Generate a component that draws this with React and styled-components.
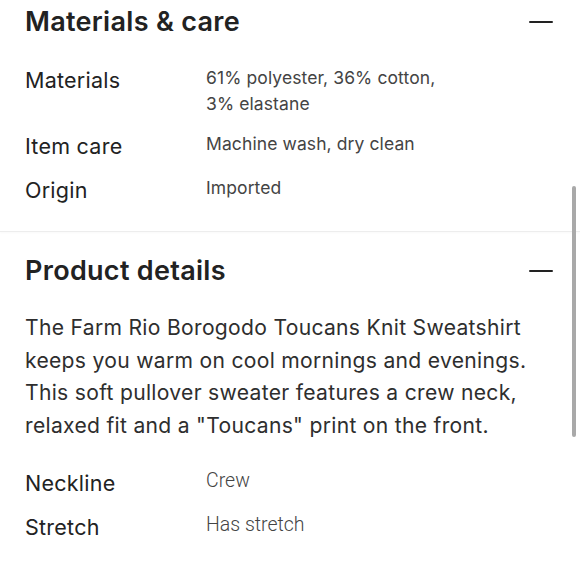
import styled, { createGlobalStyle } from 'styled-components';

const materials = [
  { label: 'Materials', value: '61% polyester, 36% cotton,\n3% elastane' },
  { label: 'Item care', value: 'Machine wash, dry clean' },
  { label: 'Origin', value: 'Imported' },
];

const details = [
  { label: 'Neckline', value: 'Crew' },
  { label: 'Stretch', value: 'Has stretch' },
];

const description =
  'The Farm Rio Borogodo Toucans Knit Sweatshirt keeps you warm on cool mornings and evenings. This soft pullover sweater features a crew neck, relaxed fit and a "Toucans" print on the front.';

const App = () => {
  return (
    <Page>
      <GlobalStyle />
      <Section>
        <Header>
          <Title>Materials &amp; care</Title>
          <Collapse aria-label='collapse' />
        </Header>
        <Specs>
          {materials.map((row) => (
            <SpecRow key={row.label}>
              <Label>{row.label}</Label>
              <Value>{row.value}</Value>
            </SpecRow>
          ))}
        </Specs>
      </Section>
      <Divider />
      <Section $top={23}>
        <Header>
          <Title>Product details</Title>
          <Collapse aria-label='collapse' />
        </Header>
        <Description>{description}</Description>
        <Specs>
          {details.map((row) => (
            <SpecRow key={row.label}>
              <Label>{row.label}</Label>
              <Value $plain>{row.value}</Value>
            </SpecRow>
          ))}
        </Specs>
      </Section>
      <Scrollbar />
    </Page>
  );
};

export default App;

const GlobalStyle = createGlobalStyle`
  body {
    margin: 0;
    background: #fff;
    font-family: Inter, "Noto Sans", sans-serif;
    color: #222;
  }
`;

const Page = styled.div`
  position: relative;
  width: 580px;
  height: 580px;
  overflow: hidden;
  background: #fff;
`;

const Section = styled.section`
  padding: ${(props) => props.$top || 6}px 27px 26px 25px;
`;

const Header = styled.div`
  display: flex;
  align-items: center;
  justify-content: space-between;
  height: 32px;
`;

const Title = styled.h2`
  margin: 0;
  font-size: 27px;
  font-weight: 600;
  letter-spacing: 0.3px;
  line-height: 32px;
  color: #222;
`;

const Collapse = styled.span`
  display: block;
  width: 24px;
  height: 2px;
  background: #222;
  border-radius: 1px;
`;

const Specs = styled.div`
  display: flex;
  flex-direction: column;
  gap: 14px;
  margin-top: 27px;
`;

const SpecRow = styled.div`
  display: grid;
  grid-template-columns: 181px 1fr;
  align-items: start;
`;

const Label = styled.span`
  font-size: 21.5px;
  letter-spacing: 0.25px;
  line-height: 30px;
  color: #222;
`;

const Value = styled.span`
  white-space: pre-line;
  font-family: ${(props) =>
    props.$plain ? 'Roboto, "Liberation Sans", sans-serif' : 'Inter, sans-serif'};
  font-weight: ${(props) => (props.$plain ? 300 : 400)};
  font-size: ${(props) => (props.$plain ? 19.5 : 17.5)}px;
  letter-spacing: ${(props) => (props.$plain ? 0 : 0.1)}px;
  line-height: 26px;
  color: #444;
`;

const Description = styled.p`
  margin: 25px 0 0;
  font-size: 21.1px;
  letter-spacing: 0.3px;
  line-height: 32.7px;
  color: #2e2e2e;
  & + div {
    margin-top: 25px;
  }
`;

const Divider = styled.hr`
  margin: 0;
  border: none;
  height: 1px;
  background: #ededed;
  box-shadow: 0 1px 2px rgba(0, 0, 0, 0.04);
`;

const Scrollbar = styled.div`
  position: absolute;
  right: 4px;
  top: 186px;
  width: 4px;
  height: 251px;
  border-radius: 2px;
  background: #a9a9a9;
`;
